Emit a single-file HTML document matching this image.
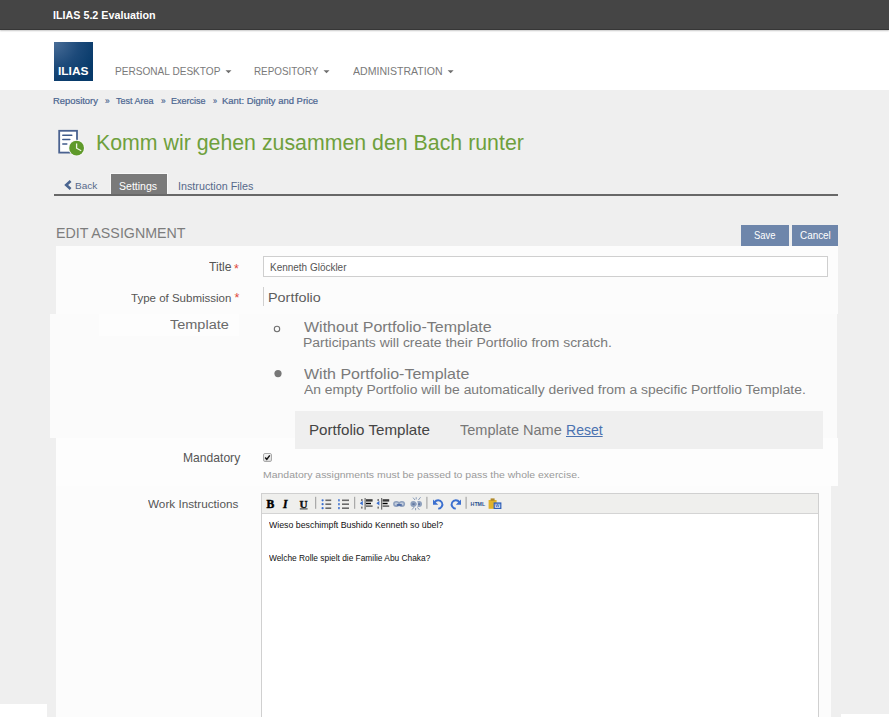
<!DOCTYPE html>
<html><head><meta charset="utf-8">
<style>
html,body{margin:0;padding:0}
body{width:889px;height:717px;overflow:hidden;position:relative;background:#efefef;font-family:"Liberation Sans",sans-serif}
.r{position:absolute}
.t{position:absolute;white-space:nowrap;transform-origin:0 0;font-family:"Liberation Sans",sans-serif}
</style></head><body>
<!-- top bar -->
<div class="r" style="left:0;top:30px;width:889px;height:60px;background:#ffffff"></div>
<div class="r" style="left:0;top:0;width:889px;height:29px;background:#454545;border-bottom:1px solid #363636;box-shadow:0 1px 1.5px rgba(0,0,0,0.22)"></div>
<!-- logo -->
<div class="r" style="left:54px;top:42px;width:39px;height:39px;background:radial-gradient(circle at 0% 0%,#4a6e98 0%,#1d4a7a 45%,#073a6a 80%)"></div>
<!-- carets -->
<svg class="r" style="left:0;top:0" width="889" height="100">
<path d="M225.5 70.2h6l-3 3z" fill="#6f6f6f"/>
<path d="M323.5 70.2h6l-3 3z" fill="#6f6f6f"/>
<path d="M447.6 70.2h6l-3 3z" fill="#6f6f6f"/>
</svg>
<!-- page icon -->
<svg class="r" style="left:50px;top:120px" width="40" height="40" viewBox="50 120 40 40">
<rect x="59.2" y="130.8" width="17.8" height="21.8" fill="#fff" stroke="#4a6290" stroke-width="1.8"/>
<path d="M62.8 135.2h9M62.8 139.6h7M62.8 144h4" stroke="#3f5a8a" stroke-width="1.5" stroke-linecap="round"/>
<circle cx="76.6" cy="148.1" r="8.3" fill="#f8f8f8"/>
<circle cx="76.6" cy="148.1" r="7.4" fill="#5f9a2a"/>
<path d="M76.6 143.6v4.6l4.6 2.5" stroke="#eef5e6" stroke-width="1.3" fill="none"/>
</svg>
<!-- tabs -->
<div class="r" style="left:110px;top:173px;width:58px;height:22px;background:#f8f8f8"></div>
<div class="r" style="left:111px;top:174px;width:56px;height:21px;background:#7a7a7a"></div>
<div class="r" style="left:54px;top:194px;width:784px;height:2px;background:#686868"></div>
<svg class="r" style="left:60px;top:176px" width="16" height="16" viewBox="60 176 16 16">
<path d="M70.6 181l-4.4 4 4.4 4" stroke="#4a6590" stroke-width="2.6" fill="none"/>
</svg>
<!-- buttons -->
<div class="r" style="left:741px;top:225px;width:48px;height:21px;background:#6e86ab"></div>
<div class="r" style="left:792px;top:225px;width:46px;height:21px;background:#6e86ab"></div>
<!-- panels -->
<div class="r" style="left:56px;top:246px;width:782px;height:68px;background:#fcfcfc"></div>
<div class="r" style="left:50px;top:314px;width:787px;height:124px;background:#fbfbfb"></div>
<div class="r" style="left:99px;top:314px;width:140px;height:22px;background:#fdfdfd"></div>
<div class="r" style="left:56px;top:438px;width:782px;height:48px;background:#fdfdfd"></div>
<div class="r" style="left:56px;top:486px;width:775px;height:231px;background:#fcfcfc"></div>
<div class="r" style="left:0;top:704px;width:47px;height:13px;background:#ffffff"></div>
<div class="r" style="left:841px;top:714px;width:48px;height:3px;background:#ffffff"></div>
<!-- input -->
<div class="r" style="left:263px;top:256px;width:563px;height:19px;background:#fff;border:1px solid #cfcfcf"></div>
<div class="r" style="left:263px;top:287px;width:1px;height:19px;background:#d0d0d0"></div>
<!-- radios -->
<svg class="r" style="left:0;top:300px" width="889" height="100" viewBox="0 300 889 100">
<circle cx="277" cy="329" r="2.7" fill="none" stroke="#707070" stroke-width="1.1"/>
<circle cx="278" cy="373.6" r="3.6" fill="#777"/>
</svg>
<!-- template box -->
<div class="r" style="left:295px;top:411px;width:528px;height:38px;background:#efefef"></div>
<!-- checkbox -->
<div class="r" style="left:263px;top:453px;width:7px;height:7px;border:1px solid #aaa;border-radius:2px;background:linear-gradient(#f4f4f4,#dcdcdc)"></div>
<svg class="r" style="left:263px;top:453px" width="9" height="9" viewBox="0 0 9 9"><path d="M2.2 4.6l1.6 1.8 3-4" stroke="#111" stroke-width="1.5" fill="none"/></svg>
<!-- editor -->
<div class="r" style="left:261px;top:493px;width:556px;height:230px;background:#fff;border:1px solid #d0d0d0"></div>
<div class="r" style="left:262px;top:494px;width:556px;height:19px;background:#efefed;border-bottom:1px solid #d4d4d4"></div>
<svg class="r" style="left:0;top:480px" width="889" height="40" viewBox="0 480 889 40">
<text x="266.4" y="507.8" font-family="Liberation Serif" font-weight="700" font-size="11.6" fill="#000" stroke="#000" stroke-width="0.5">B</text>
<text x="283.0" y="507.8" font-family="Liberation Serif" font-weight="700" font-style="italic" font-size="11.6" fill="#000" stroke="#000" stroke-width="0.4">I</text>
<text x="299.4" y="507.6" font-family="Liberation Serif" font-weight="700" font-size="11.2" fill="#111" stroke="#111" stroke-width="0.4">U</text>
<rect x="299.8" y="508.4" width="7.8" height="1" fill="#333"/>
<rect x="315.2" y="496.8" width="1" height="12" fill="#9a9a9a"/>
<rect x="354.2" y="496.8" width="1" height="12" fill="#9a9a9a"/>
<rect x="426.4" y="496.8" width="1" height="12" fill="#9a9a9a"/>
<rect x="465.6" y="496.8" width="1" height="12" fill="#9a9a9a"/>
<!-- bullet list -->
<g fill="#3b6fcf"><circle cx="322.6" cy="500.3" r="1.1"/><circle cx="322.6" cy="504.2" r="1.1"/><circle cx="322.6" cy="508.2" r="1.1"/></g>
<g fill="#6a6a6a"><rect x="325.4" y="499.5" width="5.8" height="1.6"/><rect x="325.4" y="503.4" width="5.8" height="1.6"/><rect x="325.4" y="507.4" width="5.8" height="1.6"/></g>
<!-- numbered list -->
<g fill="#3b6fcf"><rect x="338.2" y="499.2" width="1.5" height="2.2"/><rect x="338.2" y="503.1" width="1.5" height="2.2"/><rect x="338.2" y="507.0" width="1.5" height="2.2"/></g>
<g fill="#6a6a6a"><rect x="342" y="499.5" width="7" height="1.6"/><rect x="342" y="503.4" width="7" height="1.6"/><rect x="342" y="507.4" width="7" height="1.6"/></g>
<!-- outdent / indent -->
<g>
<rect x="361" y="499" width="1.6" height="2" fill="#777"/><rect x="361" y="506.6" width="1.6" height="2" fill="#777"/>
<path d="M359.8 503.2l3-2.4v4.8z" fill="#3b6fcf"/>
<rect x="364.6" y="498" width="1" height="11.6" fill="#555"/>
<rect x="366" y="499.2" width="6.6" height="2.4" fill="#3a3a3a"/><rect x="366" y="502.8" width="5" height="1.4" fill="#000"/><rect x="366" y="505.4" width="6.6" height="1.4" fill="#555"/>
</g>
<g>
<rect x="377.4" y="499" width="1.6" height="2" fill="#777"/><rect x="377.4" y="506.6" width="1.6" height="2" fill="#777"/>
<path d="M376.4 503.2l3-2.4v4.8z" fill="#3b6fcf"/>
<rect x="381.2" y="498" width="1" height="11.6" fill="#555"/>
<rect x="382.6" y="499.2" width="6.6" height="2.4" fill="#3a3a3a"/><rect x="382.6" y="502.8" width="5" height="1.4" fill="#000"/><rect x="382.6" y="505.4" width="6.6" height="1.4" fill="#555"/>
</g>
<!-- link -->
<ellipse cx="396.4" cy="503.9" rx="3.3" ry="3" fill="#8ea0bd"/><ellipse cx="401.8" cy="503.9" rx="3.3" ry="3" fill="#8ea0bd"/>
<ellipse cx="396.4" cy="503.9" rx="1.8" ry="1.4" fill="#c3cddd"/><ellipse cx="401.8" cy="503.9" rx="1.8" ry="1.4" fill="#c3cddd"/>
<rect x="396.8" y="504.2" width="5" height="1.5" fill="#3f5f9f"/>
<!-- unlink -->
<ellipse cx="413.4" cy="504" rx="3" ry="3" fill="#8ea0bd"/><ellipse cx="419" cy="504" rx="3" ry="3" fill="#8ea0bd"/>
<path d="M415.2 500.6l1.8 3.4-1.6 3.4h1.4l1.6-3.4-1.8-3.4z" fill="#eef1f6"/>
<rect x="412.4" y="503.4" width="2.2" height="1.4" fill="#556d9a"/><rect x="417.8" y="503.4" width="2.2" height="1.4" fill="#556d9a"/>
<g stroke="#7f93b2" stroke-width="0.9"><path d="M413 497.6l2 2.4M416.2 497.2v2.2M420.6 497.2l-2.2 2.8M412 509.6l2.2-2.6M415.6 510.2v-2.2M419.4 509.8l-2-2.4"/></g>
<!-- undo -->
<path d="M434.6 502.2a4.2 4.2 0 1 1 3.6 6.4" fill="none" stroke="#3b6fcf" stroke-width="1.9"/>
<path d="M433 499.4v5.4h5.2z" fill="#3b6fcf"/>
<!-- redo -->
<path d="M459.4 502.2a4.2 4.2 0 1 0 -3.6 6.4" fill="none" stroke="#3b6fcf" stroke-width="1.9"/>
<path d="M461 499.4v5.4h-5.2z" fill="#3b6fcf"/>
<!-- HTML -->
<text x="470.6" y="506.3" font-family="Liberation Sans" font-weight="700" font-size="5.6" fill="#2d4f8f" textLength="14.6" lengthAdjust="spacingAndGlyphs">HTML</text>
<!-- paste word -->
<rect x="488.6" y="500" width="8" height="8.8" fill="#e0b22a"/>
<rect x="490.6" y="498.4" width="4" height="2.4" fill="#b0892a"/>
<rect x="493.6" y="502.4" width="7.8" height="6.6" fill="#2f5fb8"/>
<rect x="494.8" y="503.8" width="5.4" height="4" fill="#dfe7f5"/>
<text x="495.2" y="507.4" font-family="Liberation Sans" font-weight="700" font-size="4.4" fill="#2f5fb8">W</text>
</svg>
<div class="t" style="left:234.1px;top:262.5px;font-size:12.5px;line-height:12.5px;color:#e0473a">*</div>
<div class="t" style="left:234.4px;top:292.4px;font-size:12.5px;line-height:12.5px;color:#e0473a">*</div>

<div class="t" style="left:52.83px;top:7.90px;font-size:11.34px;line-height:14.74px;color:#ffffff;font-weight:700;transform:scaleX(0.9476);">ILIAS 5.2 Evaluation</div>
<div class="t" style="left:58.00px;top:63.31px;font-size:11.63px;line-height:15.12px;color:#ffffff;font-weight:700;transform:scaleX(1.0267);">ILIAS</div>
<div class="t" style="left:114.91px;top:63.95px;font-size:11.48px;line-height:14.93px;color:#7a7a7a;font-weight:400;transform:scaleX(0.8797);">PERSONAL DESKTOP</div>
<div class="t" style="left:254.43px;top:63.95px;font-size:11.48px;line-height:14.93px;color:#7a7a7a;font-weight:400;transform:scaleX(0.8585);">REPOSITORY</div>
<div class="t" style="left:353.00px;top:63.95px;font-size:11.48px;line-height:14.93px;color:#7a7a7a;font-weight:400;transform:scaleX(0.9206);">ADMINISTRATION</div>
<div class="t" style="left:53.07px;top:96.48px;font-size:9.16px;line-height:11.9px;color:#4a6590;font-weight:400;transform:scaleX(1.0266);-webkit-text-stroke:0.2px #4a6590;">Repository</div>
<div class="t" style="left:104.74px;top:96.48px;font-size:9.16px;line-height:11.9px;color:#4a6590;font-weight:400;transform:scaleX(0.9018);-webkit-text-stroke:0.2px #4a6590;">»</div>
<div class="t" style="left:115.86px;top:96.48px;font-size:9.16px;line-height:11.9px;color:#4a6590;font-weight:400;transform:scaleX(0.9846);-webkit-text-stroke:0.2px #4a6590;">Test Area</div>
<div class="t" style="left:160.74px;top:96.48px;font-size:9.16px;line-height:11.9px;color:#4a6590;font-weight:400;transform:scaleX(0.9018);-webkit-text-stroke:0.2px #4a6590;">»</div>
<div class="t" style="left:171.30px;top:96.48px;font-size:9.16px;line-height:11.9px;color:#4a6590;font-weight:400;transform:scaleX(0.9845);-webkit-text-stroke:0.2px #4a6590;">Exercise</div>
<div class="t" style="left:212.77px;top:96.48px;font-size:9.16px;line-height:11.9px;color:#4a6590;font-weight:400;transform:scaleX(0.7891);-webkit-text-stroke:0.2px #4a6590;">»</div>
<div class="t" style="left:222.26px;top:96.48px;font-size:9.16px;line-height:11.9px;color:#4a6590;font-weight:400;transform:scaleX(1.0320);-webkit-text-stroke:0.2px #4a6590;">Kant: Dignity and Price</div>
<div class="t" style="left:96.23px;top:129.42px;font-size:21.66px;line-height:28.15px;color:#6ea03c;font-weight:400;transform:scaleX(0.9846);">Komm wir gehen zusammen den Bach runter</div>
<div class="t" style="left:75.22px;top:179.55px;font-size:9.88px;line-height:12.85px;color:#56698a;font-weight:400;transform:scaleX(1.0161);">Back</div>
<div class="t" style="left:119.47px;top:178.79px;font-size:11.05px;line-height:14.36px;color:#ffffff;font-weight:400;transform:scaleX(0.9535);">Settings</div>
<div class="t" style="left:178.46px;top:178.79px;font-size:11.05px;line-height:14.36px;color:#56698a;font-weight:400;transform:scaleX(0.9744);">Instruction Files</div>
<div class="t" style="left:55.59px;top:223.30px;font-size:15.55px;line-height:20.22px;color:#7d7d7d;font-weight:400;transform:scaleX(0.9164);">EDIT ASSIGNMENT</div>
<div class="t" style="left:754.00px;top:228.14px;font-size:10.90px;line-height:14.17px;color:#ffffff;font-weight:400;transform:scaleX(0.8685);">Save</div>
<div class="t" style="left:800.44px;top:228.14px;font-size:10.90px;line-height:14.17px;color:#ffffff;font-weight:400;transform:scaleX(0.9081);">Cancel</div>
<div class="t" style="left:209.11px;top:260.18px;font-size:12.06px;line-height:15.68px;color:#555555;font-weight:400;transform:scaleX(1.0108);">Title</div>
<div class="t" style="left:270.32px;top:260.91px;font-size:10.32px;line-height:13.42px;color:#555555;font-weight:400;transform:scaleX(0.9667);">Kenneth Glöckler</div>
<div class="t" style="left:131.22px;top:290.55px;font-size:11.48px;line-height:14.93px;color:#555555;font-weight:400;transform:scaleX(1.0032);">Type of Submission</div>
<div class="t" style="left:268.08px;top:289.60px;font-size:12.65px;line-height:16.44px;color:#5e5e5e;font-weight:400;transform:scaleX(1.1384);">Portfolio</div>
<div class="t" style="left:170.17px;top:316.60px;font-size:12.65px;line-height:16.44px;color:#6a6a6a;font-weight:400;transform:scaleX(1.1462);">Template</div>
<div class="t" style="left:304.10px;top:317.91px;font-size:14.54px;line-height:18.9px;color:#7a7a7a;font-weight:400;transform:scaleX(1.1015);">Without Portfolio-Template</div>
<div class="t" style="left:302.91px;top:334.74px;font-size:12.50px;line-height:16.25px;color:#7a7a7a;font-weight:400;transform:scaleX(1.1146);">Participants will create their Portfolio from scratch.</div>
<div class="t" style="left:304.10px;top:365.31px;font-size:14.54px;line-height:18.9px;color:#7a7a7a;font-weight:400;transform:scaleX(1.1005);">With Portfolio-Template</div>
<div class="t" style="left:304.00px;top:382.14px;font-size:12.50px;line-height:16.25px;color:#7a7a7a;font-weight:400;transform:scaleX(1.1100);">An empty Portfolio will be automatically derived from a specific Portfolio Template.</div>
<div class="t" style="left:309.02px;top:419.88px;font-size:14.97px;line-height:19.46px;color:#444444;font-weight:400;transform:scaleX(1.0114);">Portfolio Template</div>
<div class="t" style="left:459.77px;top:420.48px;font-size:14.97px;line-height:19.46px;color:#777777;font-weight:400;transform:scaleX(0.9711);">Template Name</div>
<div class="t" style="left:565.70px;top:420.48px;font-size:14.97px;line-height:19.46px;color:#4a72b0;font-weight:400;transform:scaleX(0.9371);text-decoration:underline;">Reset</div>
<div class="t" style="left:182.95px;top:449.69px;font-size:12.35px;line-height:16.06px;color:#555555;font-weight:400;transform:scaleX(0.9807);">Mandatory</div>
<div class="t" style="left:262.78px;top:469.14px;font-size:9.59px;line-height:12.47px;color:#9a9a9a;font-weight:400;transform:scaleX(1.0921);">Mandatory assignments must be passed to pass the whole exercise.</div>
<div class="t" style="left:147.70px;top:496.95px;font-size:11.48px;line-height:14.93px;color:#555555;font-weight:400;transform:scaleX(1.0224);">Work Instructions</div>
<div class="t" style="left:268.80px;top:519.38px;font-size:9.45px;line-height:12.28px;color:#111111;font-weight:400;transform:scaleX(0.9303);">Wieso beschimpft Bushido Kenneth so übel?</div>
<div class="t" style="left:268.80px;top:551.58px;font-size:9.45px;line-height:12.28px;color:#111111;font-weight:400;transform:scaleX(0.8843);">Welche Rolle spielt die Familie Abu Chaka?</div>
</body></html>
